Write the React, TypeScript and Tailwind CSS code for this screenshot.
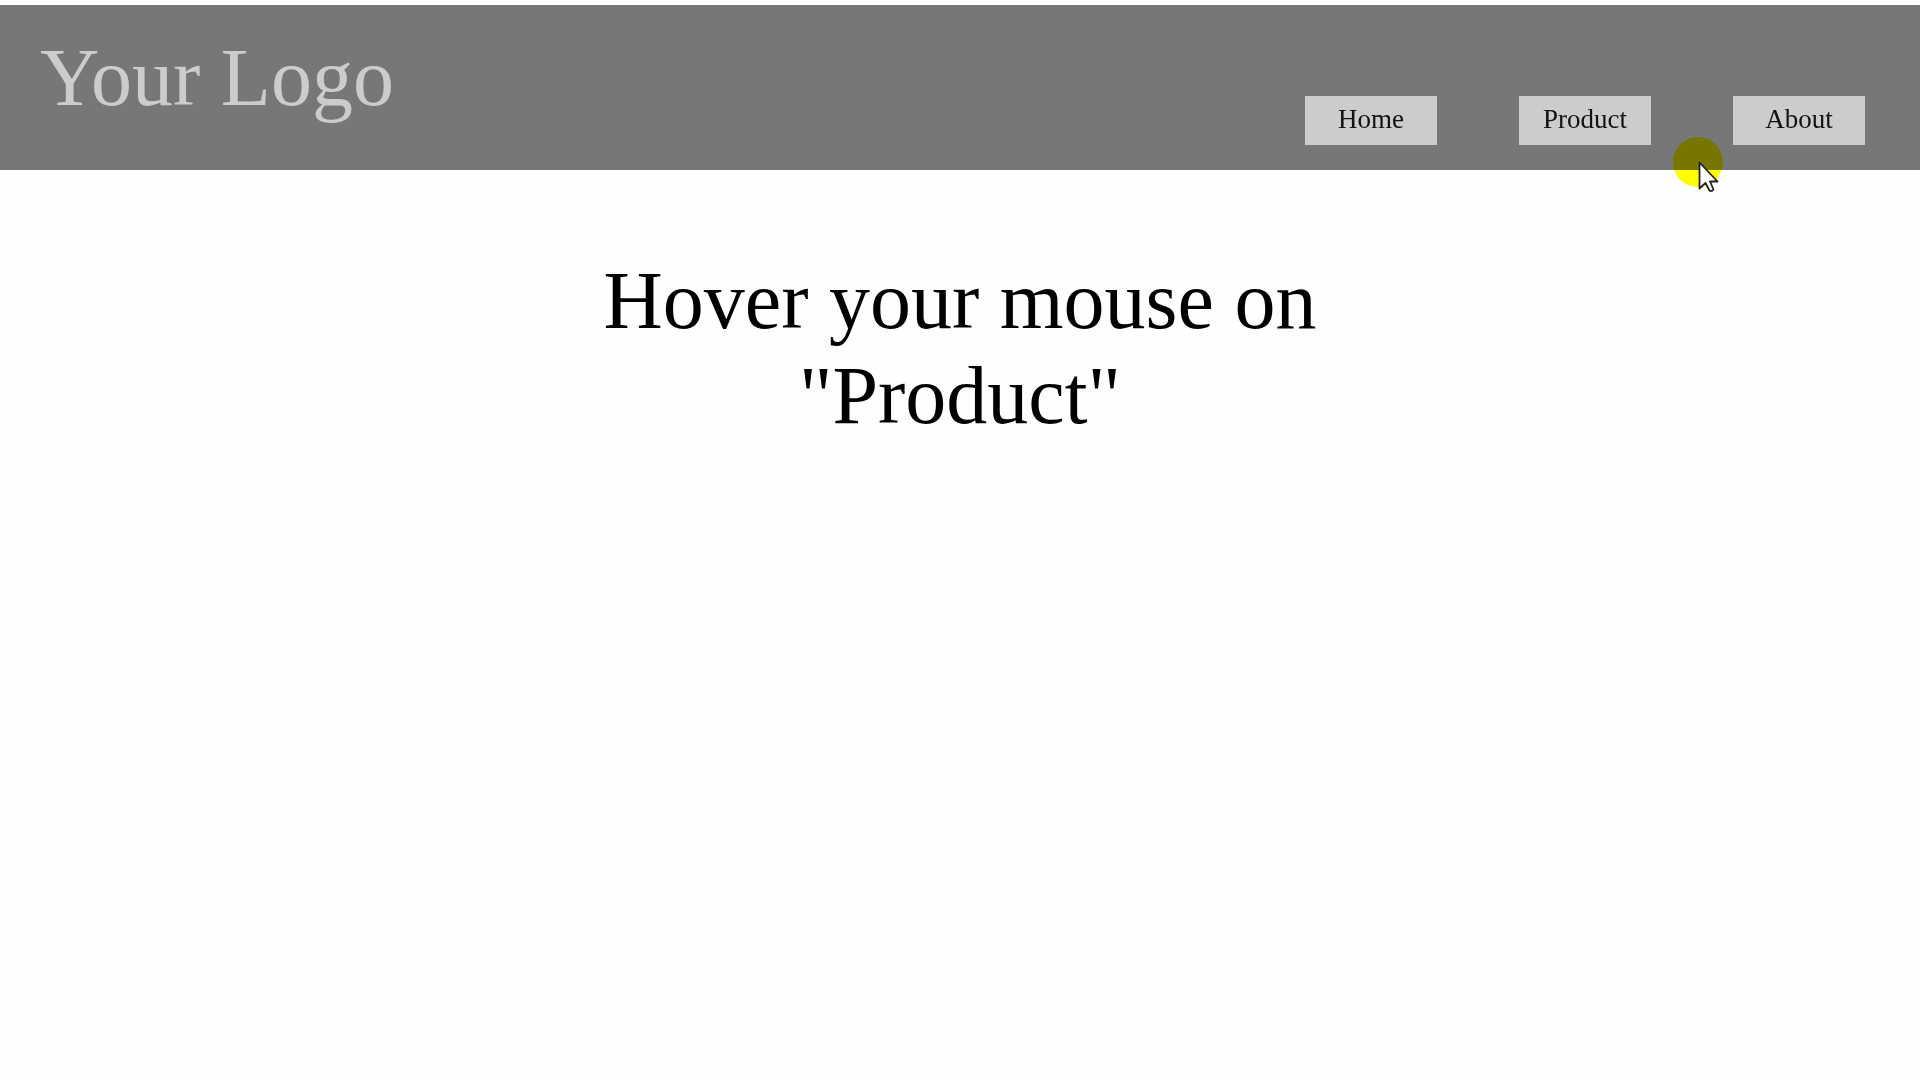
const links = ["Home", "Product", "About"];

function Pointer() {
  return (
    <div className="pointer-events-none absolute right-[197px] -bottom-[17px] size-[50px]" aria-hidden="true">
      <div className="size-full rounded-full bg-[#ffff00] mix-blend-multiply" />
      <svg className="absolute top-[24px] left-[25px] h-[32px] w-[22px]" viewBox="0 0 22 32">
        <path
          d="M1.5 1.5V27.5L7.5 22L11.5 29.5Q13.5 31 15.5 28.5L12 20.5H19.5Z"
          fill="#ffffff"
          stroke="#222222"
          strokeWidth="1.8"
          strokeLinejoin="round"
        />
      </svg>
    </div>
  );
}

export default function App() {
  return (
    <div className="min-h-screen bg-[#fefefd] pt-[5px] font-['Liberation_Serif','Times_New_Roman',serif]">
      <header className="relative flex h-[165px] items-start justify-between bg-[#777777] pr-[55px] pl-10">
        <div className="pt-[25px] text-[82px] leading-[95px] text-[#cccccc]">Your Logo</div>
        <nav className="flex gap-[82px] pt-[91px]" aria-label="Main">
          {links.map((label) => (
            <a
              key={label}
              href="#"
              className="block h-[49px] w-[132px] bg-[#cccccc] text-center text-[27px] leading-[46px] text-[#111111]"
            >
              {label}
            </a>
          ))}
        </nav>
        <Pointer />
      </header>
      <main className="px-10 pt-[83px]">
        <h1 className="mx-auto max-w-[800px] text-center text-[82px] leading-[95px] text-black">
          Hover your mouse on &quot;Product&quot;
        </h1>
      </main>
    </div>
  );
}
